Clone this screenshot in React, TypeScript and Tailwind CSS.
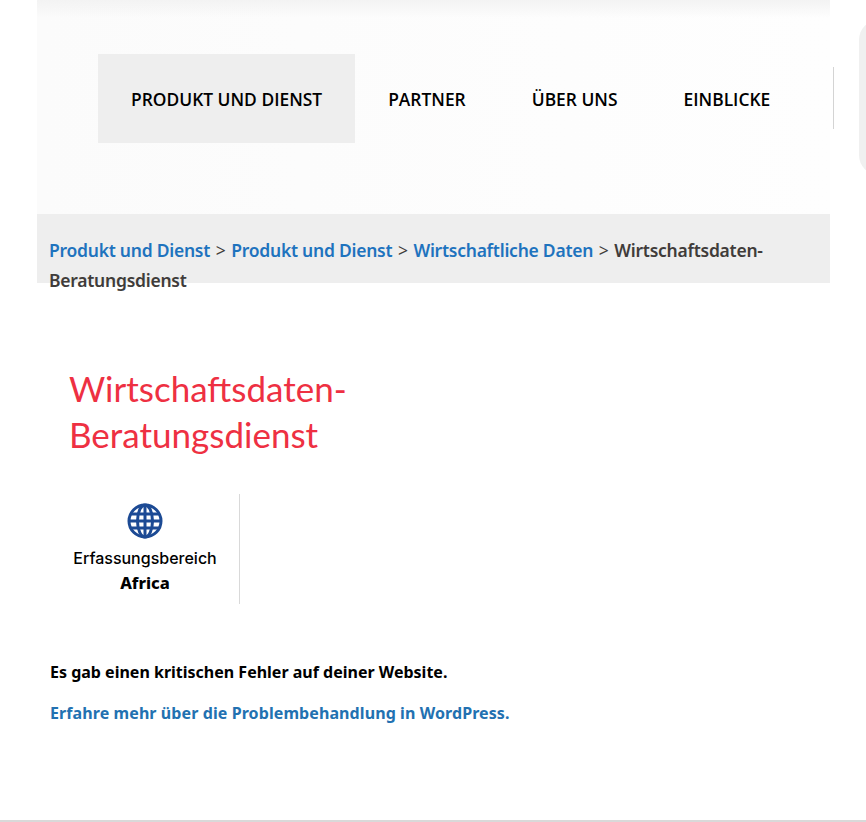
import React from "react";

const NAV_ITEMS = ["PRODUKT UND DIENST", "PARTNER", "ÜBER UNS", "EINBLICKE"];

function Globe() {
  return (
    <svg width="36" height="36" viewBox="0 0 36 36" fill="none" stroke="#1c4a94" strokeWidth="3">
      <circle cx="18" cy="18" r="16" />
      <ellipse cx="18" cy="18" rx="7.5" ry="16" />
      <path d="M18 2v32M3.5 11h29M2 18h32M3.5 25h29" />
    </svg>
  );
}

function Sep() {
  return <span className="font-normal tracking-normal px-[1px]"> &gt; </span>;
}

export default function App() {
  return (
    <div className="relative w-[866px] h-[822px] overflow-hidden bg-white border-b-[2px] border-[#d9d9d9]">
      {/* rounded panel cut off by the right edge */}
      <div className="absolute right-[-23px] top-[20px] w-[30px] h-[155px] bg-[#f0f0f0] rounded-l-[20px]" />

      <div className="ml-[37px] w-[793px]">
        {/* Header */}
        <div className="relative h-[214px] bg-gradient-to-r from-[#fbfbfb] to-[#fefefe] pl-[61px] pt-[54px] flex items-start font-['Open_Sans',sans-serif]">
          <div className="absolute left-0 right-0 top-0 h-[18px] bg-gradient-to-b from-[#f3f3f3] to-transparent" />
          <nav className="relative flex shrink-0">
            {NAV_ITEMS.map((item, i) => (
              <a
                key={item}
                className={`h-[89px] px-[33px] pt-[1px] flex items-center text-[17.4px] font-semibold text-black whitespace-nowrap ${
                  i === 0 ? "bg-[#eeeeee]" : ""
                }`}
              >
                {item}
              </a>
            ))}
          </nav>
          <div className="relative shrink-0 ml-[30px] mt-[13px] w-px h-[62px] bg-[#d4d4d4]" />
        </div>

        {/* Breadcrumb */}
        <div className="h-[69px] bg-[#eeeeee] px-3 pt-[21px] text-[17.5px] tracking-[-0.25px] leading-[30px] font-semibold font-['Noto_Sans',sans-serif] text-[#403c3a]">
          <a className="text-[#1e73be]">Produkt und Dienst</a>
          <Sep />
          <a className="text-[#1e73be]">Produkt und Dienst</a>
          <Sep />
          <a className="text-[#1e73be]">Wirtschaftliche Daten</a>
          <Sep />
          Wirtschaftsdaten-Beratungsdienst
        </div>

        {/* Title */}
        <h1 className="mt-[82px] ml-[32px] w-[320px] text-[35px] leading-[46px] text-[#ee3042] font-['Lato',sans-serif]">
          Wirtschaftsdaten-Beratungsdienst
        </h1>

        {/* Coverage box */}
        <div className="mt-[37px] ml-[16px] w-[187px] h-[110px] border-r border-[#d9d9d9] flex flex-col items-center pt-[9px] pr-[2px]">
          <Globe />
          <div className="mt-[7px] text-[16px] leading-[24px] text-black font-['Inter',sans-serif] font-medium">
            Erfassungsbereich
          </div>
          <div className="mt-[1px] text-[16.5px] leading-[24px] font-extrabold text-black font-['Noto_Sans',sans-serif]">
            Africa
          </div>
        </div>

        {/* Error message */}
        <div className="mt-[56px] ml-[13px] text-[16px] leading-[24px] font-bold font-['Noto_Sans',sans-serif]">
          <p className="text-black">Es gab einen kritischen Fehler auf deiner Website.</p>
          <p className="mt-[17px] text-[#2271b1] tracking-[0.09px]">Erfahre mehr über die Problembehandlung in WordPress.</p>
        </div>
      </div>
    </div>
  );
}
